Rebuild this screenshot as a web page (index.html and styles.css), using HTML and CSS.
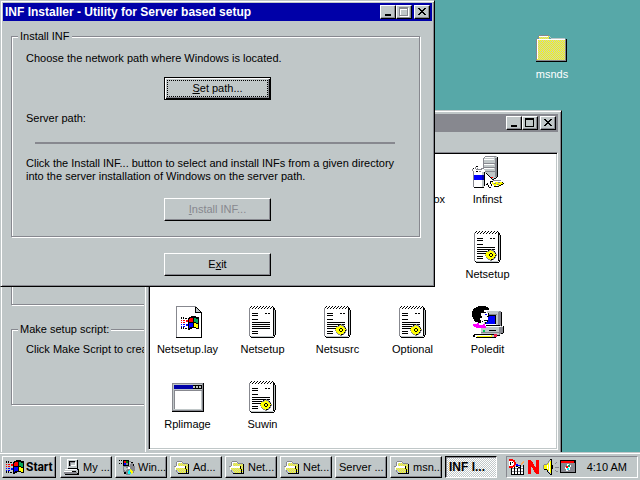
FILE: index.html
```html
<!DOCTYPE html>
<html lang="en">
<head>
<meta charset="utf-8">
<title>Desktop</title>
<link rel="stylesheet" href="styles.css">
</head>
<body>
<svg class="sprites" aria-hidden="true">
  <defs>
    <pattern id="dither" width="2" height="2" patternUnits="userSpaceOnUse">
      <rect width="2" height="2" fill="#ff0"/><path fill="#c0c7c8" d="M0 0h1v1H0zM1 1h1v1H1z"/>
    </pattern>
    <symbol id="note" viewBox="0 0 32 32">
      <path fill="#fff" d="M3 2h23v28H3z"/>
      <path fill="#87888f" d="M2 2h1v28H2zM3 30h1v1H3z"/>
      <path fill="#c0c7c8" d="M27 3h1v27h-1zM4 30h22v1H4z"/>
      <path d="M26 2h1v28h-1zM28 4h1v25h-1zM27 2h1v2h-1zM27 29h1v2h-1zM4 31h23v1H4zM3 30h1v1H3z"/>
      <path d="M4 0h1v1H4zM3 1h1v1H3zM5 2h1v1H5zM7 0h1v1H7zM6 1h1v1H6zM8 2h1v1H8zM10 0h1v1h-1zM9 1h1v1H9zM11 2h1v1h-1zM13 0h1v1h-1zM12 1h1v1h-1zM14 2h1v1h-1zM16 0h1v1h-1zM15 1h1v1h-1zM17 2h1v1h-1zM19 0h1v1h-1zM18 1h1v1h-1zM20 2h1v1h-1zM22 0h1v1h-1zM21 1h1v1h-1zM23 2h1v1h-1zM25 0h1v1h-1zM24 1h1v1h-1zM26 1h1v1h-1z"/>
      <path d="M5 7h6v1H5zM5 9h6v1H5zM5 13h6v1H5zM18 7h2v1h-2zM21 7h2v1h-2zM5 16h18v1H5zM5 18h18v1H5zM5 20h18v1H5zM5 22h18v1H5zM5 25h6v1H5zM5 27h6v1H5z"/>
    </symbol>
    <symbol id="gearnote" viewBox="0 0 32 32">
      <use href="#note" width="32" height="32"/>
      <path fill="#87888f" d="M18 18h2v1h2v1h1v1h1v2h1v2h-1v2h-1v1h-1v1h-2v1h-2v-1h-2v-1h-1v-1h-1v-2h-1v-2h1v-2h1v-1h1v-1h2z"/>
      <path d="M18 18h1v1h-1zM20 18h1v1h-1zM16 19h1v1h-1zM22 20h1v1h-1zM23 22h1v3h-1zM14 22h1v1h-1zM14 25h1v1h-1zM22 26h1v1h-1zM16 27h1v1h-1zM18 28h3v1h-3z"/>
      <path fill="#ff0" d="M17 20h1v-1h1v1h2v1h1v1h1v1h1v1h-1v2h-1v1h-1v1h-2v1h-1v-1h-2v-1h-1v-1h-1v-2h-1v-1h1v-2h2z"/>
      <path d="M18 22h2v1h1v2h-1v1h-2v-1h-1v-2h1z"/>
      <path fill="#ff0" d="M18 23h2v2h-2z"/>
    </symbol>
    <symbol id="flag" viewBox="0 0 18 16">
      <path d="M8 2h2V1h5v1h3v12h-3v-1h-4v1H9v1H7V3h1z"/>
      <path fill="#f00" d="M9 3h3v4H8V4h1z"/>
      <path fill="#00a857" d="M13 3h2v1h2v4h-2V7h-2z"/>
      <path fill="#00f" d="M8 8h4v4H9v1H8z"/>
      <path fill="#ff0" d="M13 8h2v1h2v4h-2v-1h-2z"/>
      <path d="M0 2h1v2H0zM2 2h1v2H2zM4 3h2v1H4zM0 12h1v2H0zM2 12h1v2H2zM4 13h2v1H4z"/>
      <path fill="#f00" d="M0 5h1v1H0zM2 5h2v1H2zM5 5h2v2H5zM0 7h1v1H0zM2 7h2v1H2z"/>
      <path fill="#00f" d="M0 9h1v1H0zM2 9h2v1H2zM5 9h2v2H5zM0 11h1v1H0zM2 11h2v1H2z"/>
    </symbol>
    <symbol id="layfile" viewBox="0 0 32 32">
      <path fill="#fff" d="M5 1h19l5 5v25H5z"/>
      <path fill="#87888f" d="M4 0h20v1H5v30H4z"/>
      <path fill="#c0c7c8" d="M24 2h1v1h1v1h1v1h1v1h-4z"/>
      <path d="M23 1h1v5h5v1h-6zM24 1h1v1h-1zM25 2h1v1h-1zM26 3h1v1h-1zM27 4h1v1h-1zM28 5h1v1h-1zM29 6h1v26H4v-1h25z"/>
      <use href="#flag" x="9" y="9" width="18" height="16"/>
    </symbol>
    <symbol id="appwin" viewBox="0 0 32 32">
      <path d="M0 2h32v29H0z"/><path fill="#87888f" d="M0 2h31v28H0z"/>
      <path fill="#c0c7c8" d="M1 3h29v26H1z"/><path fill="#0000a8" d="M2 4h19v4H2z"/>
      <path d="M21 4h9v4h-9z"/><path fill="#c0c7c8" d="M21 5h2v2h-2zM24 5h2v2h-2zM27 5h2v2h-2z"/>
      <path fill="#87888f" d="M2 9h28v1H3v18H2z"/><path fill="#fff" d="M3 10h26v18H3z"/>
    </symbol>
    <symbol id="tower" viewBox="0 0 32 32">
      <path fill="#c0c7c8" d="M11 2l2-2h12v22h-3l-2 2h-2l-4-6h-3z"/>
      <path fill="#87888f" d="M13 0h11v1H13zM12 1h1v1h-1zM11 2h1v14h-1zM23 2h2v19h-2zM12 7h11v1H12zM12 11h11v1H12zM12 15h11v1H12z"/>
      <path fill="#fff" d="M13 1h9v1h-9zM12 3h10v1H12zM12 8h10v1H12zM12 12h10v1H12z"/>
      <path d="M25 1h1v20h-1zM24 21h1v1h-1zM22 22h2v1h-2zM20 23h2v1h-2z"/>
      <path fill="#f00" d="M19 21h2v1h-2z"/>
      <path fill="#fff" d="M2 16h9v15H2zM1 13l3-3 2 3 5-2 2 4-2 2H2z"/>
      <path fill="#c0c7c8" d="M10 16h2v15h-2z"/>
      <path fill="#87888f" d="M1 15h1v16H1zM0 13h1v2H0zM3 11h1v2H3zM5 12h1v1h3v-1h3v1h-2v1H4v-1h1zM7 15h2v1H7z"/>
      <path d="M1 12h1v1H1zM4 10h2v1H4zM12 16h1v14h-1zM2 31h10v1H2zM4 15h2v1H4z"/>
      <path fill="#00f" d="M2 19h8v5H2z"/><path fill="#0000a8" d="M10 19h2v5h-2z"/>
      <path fill="#fff" d="M13 17h1v1h1v1h1v1h1v1h1v1h1v1h1v1h1v1h-4v2h1v2h1v2h-2v-2h-1v-2h-1v1h-1v1h-1z"/>
      <path d="M14 17h1v1h-1zM15 18h1v1h-1zM16 19h1v1h-1zM17 20h1v1h-1zM18 21h1v1h-1zM19 22h1v1h-1zM20 23h1v1h-1zM18 25h3v1h-3zM18 26h1v2h-1zM19 28h1v2h-1zM14 28h1v1h-1zM15 27h1v2h-1zM16 29h1v2h-1zM17 31h2v1h-2z"/>
      <path fill="#ff0" d="M20 26h10v1h1v1h-2v1h-2v1h-5v-1h-1z"/>
      <path fill="#87888f" d="M21 24h8v1h-8zM22 27h2v1h-2zM26 26h2v1h-2zM25 28h2v1h-2z"/>
      <path fill="#fff" d="M21 25h8v1h-8zM21 26h2v1h-2zM24 29h2v1h-2z"/>
      <path d="M30 26h1v1h-1zM31 27h1v1h-1zM29 28h2v1h-2zM27 29h2v1h-2zM22 30h5v1h-5z"/>
    </symbol>
    <symbol id="poledit" viewBox="0 0 32 32">
      <path fill="#c0c7c8" d="M15 5h13v14H12V9z"/><path fill="#fff" d="M16 4h11v1H16zM12 18h12v1H12z"/>
      <path fill="#87888f" d="M27 5h2v15h-3V7zM16 8h9v1h-9z"/><path d="M29 6h1v14h-1zM14 19h14v1H14z"/>
      <path d="M15 9h9v9H13z"/><path fill="#00f" d="M16 10h7v8h-9v-2h2z"/>
      <path fill="#c0c7c8" d="M8 21l3-1h19v6l-3 3H8z"/><path fill="#fff" d="M9 20h20v1H9zM8 21h1v7H8z"/>
      <path fill="#87888f" d="M27 21h4v6h-1v1h-2v1h-1zM9 26h18v1H9z"/><path d="M31 20h1v7h-1zM29 27h2v1h-2zM9 29h19v1H9zM17 24h7v1h-7z"/>
      <path fill="#00c957" d="M11 24h2v2h-2z"/>
      <path fill="#fff" d="M9 4h6v3h1v3h1v1h-1v3h-1v2h-3v3H7v-4z"/>
      <path d="M4 1h2V0h8v1h2v1h1v2h-5v3H9v3h1v2H8v2h1v3H6v-1H3v-1H2v-2H1v-2H0V5h1V3h1V2h2z"/>
      <path d="M12 6h2v1h-2zM16 7h1v2h-1zM15 10h2v1h-2zM12 14h3v1h-3zM10 15h1v1h-1z"/><path fill="#00f" d="M13 8h2v1h-2z"/>
      <path fill="#f0f" d="M1 18h4v-1h2v2h4v-1h2v2h1v2H4v-1H2v-1H1z"/>
      <path d="M1 29h1v-1h22v1h1v2h-1v1H4v-1H1z"/><path fill="#ff0" d="M5 29h15v2H5z"/><path fill="#fff" d="M5 29h14v1H5zM3 29h2v2H3z"/><path fill="#c0c7c8" d="M20 29h2v2h-2z"/><path fill="#f0204f" d="M22 28h3v3h-3z"/>
    </symbol>
    <symbol id="bigfolder" viewBox="0 0 32 28">
      <path fill="url(#dither)" d="M1 4h2V1h10v3h16v21H1z"/>
      <path fill="#87888f" d="M0 4h1v21H0zM1 3h1v1H1zM2 1h1v2H2zM3 0h10v1H3z"/><path fill="#fff" d="M3 1h9v1H3zM1 4h1v20H1zM13 4h16v1H13zM2 4h11v1H2z"/>
      <path fill="#c0c7c8" d="M13 1h1v1h-1zM14 2h1v1h-1zM15 3h14v1H15z"/>
      <path fill="#87888f" d="M29 4h1v22H0v-1h29z"/><path d="M30 4h1v22h-1zM0 26h31v1H0z"/>
    </symbol>
    <symbol id="folder" viewBox="0 0 16 16">
      <path fill="url(#dither)" d="M3 3h6l2 2h3v9H5L1 8h2z"/>
      <path fill="#87888f" d="M3 2h5v1H3zM2 3h1v4H2zM8 3h1v1H8zM9 4h5v1H9zM0 7h2v1H0zM1 9h1v2H1zM2 11h1v2H2zM3 13h1v1H3z"/>
      <path fill="#fff" d="M3 3h5v1H3zM3 4h1v3H3zM1 8h10v1H2v2H1zM2 7h9v1H2z"/>
      <path d="M14 5h1v10H4v-1h10zM11 7h1v3h-1zM12 10h1v4h-1z"/>
    </symbol>
    <symbol id="computer" viewBox="0 0 16 16">
      <path d="M4 1h10v9H4z"/><path fill="#c0c7c8" d="M3 0h10v9H3z"/><path fill="#fff" d="M3 0h10v1H4v8H3z"/>
      <path d="M5 2h6v1H6v4H5z"/><path fill="#87888f" d="M6 3h5v1H7v3H6z"/><path fill="#fff" d="M7 6h4V3h1v4H7z"/>
      <path d="M1 10h14v5H1z"/><path fill="#c0c7c8" d="M1 10h12v1h1v3H1z"/>
      <path fill="#fff" d="M1 10h12v1H1zM0 12h12v1H0z"/><path fill="#87888f" d="M0 13h13v2H0z"/><path d="M8 12h4v1H8zM1 15h14v1H1z"/>
    </symbol>
    <symbol id="disc" viewBox="0 0 16 16">
      <path fill="#87888f" d="M7 2h5v1h2v2h1v2h1v5h-1v2h-2v1h-2v1H7v-1H5v-2H4V5h1V3h2z"/>
      <path fill="#c0c7c8" d="M10 3h3l-3 5zM5 8l4 1-3 4z"/><path fill="#0ff" d="M10 10l2 5H9z"/><path fill="#ff0" d="M11 10l3 3-2 2z"/><path fill="#fff" d="M9 8h2v2H9z"/>
      <path d="M0 1h1v1H0zM2 1h1v1H2zM0 4h1v1H0zM2 4h1v1H2zM4 1h5v1H4zM4 2h1v5H4zM9 1h1v6H9zM5 6h4v1H5zM12 3h2v1h-2zM14 5h1v2h-1zM5 13h2v2H5z"/>
      <path fill="#f00" d="M5 2h2v2H5z"/><path fill="#008000" d="M7 2h2v2H7z"/><path fill="#00f" d="M5 4h2v2H5z"/>
    </symbol>
  </defs>
</svg>

<main class="desktop">
  <a class="item shortcut" href="#"><svg class="shortcut-icon"><use href="#bigfolder"/></svg><span>msnds</span></a>

  <section class="window script-window">
    <fieldset class="group previous-group"></fieldset>
    <fieldset class="group script-group">
      <legend>Make setup script:</legend>
      <p>Click Make Script to crea</p>
    </fieldset>
  </section>

  <section class="window explorer">
    <header class="titlebar inactive">
      <div class="controls">
        <button class="control" aria-label="Minimize"><svg viewBox="0 0 12 10"><path d="M3 7h6v2H3z"/></svg></button>
        <button class="control" aria-label="Maximize"><svg viewBox="0 0 12 10"><path fill-rule="evenodd" d="M1 0h9v9H1zM2 2h7v6H2z"/></svg></button>
        <button class="control close" aria-label="Close"><svg viewBox="0 0 12 10"><path d="M2 1h2v1h1v1h2V2h1V1h2v1H9v1H8v1H7v1h1v1h1v1h1v1H8V7H7V6H5v1H4v1H2V7h1V6h1V5h1V4H4V3H3V2H2z"/></svg></button>
      </div>
    </header>
    <div class="menubar"></div>
    <div class="files">
      <a class="item partial" href="#"><span>ox</span></a>
      <a class="item infinst" href="#"><svg><use href="#tower"/></svg><span>Infinst</span></a>
      <a class="item last" href="#"><svg><use href="#gearnote"/></svg><span>Netsetup</span></a>
      <a class="item" href="#"><svg><use href="#layfile"/></svg><span>Netsetup.lay</span></a>
      <a class="item" href="#"><svg><use href="#note"/></svg><span>Netsetup</span></a>
      <a class="item" href="#"><svg><use href="#gearnote"/></svg><span>Netsusrc</span></a>
      <a class="item" href="#"><svg><use href="#gearnote"/></svg><span>Optional</span></a>
      <a class="item" href="#"><svg><use href="#poledit"/></svg><span>Poledit</span></a>
      <a class="item" href="#"><svg><use href="#appwin"/></svg><span>Rplimage</span></a>
      <a class="item" href="#"><svg><use href="#gearnote"/></svg><span>Suwin</span></a>
    </div>
  </section>

  <section class="window installer">
    <header class="titlebar">
      <h1>INF Installer - Utility for Server based setup</h1>
      <div class="controls">
        <button class="control" aria-label="Minimize"><svg viewBox="0 0 12 10"><path d="M3 7h6v2H3z"/></svg></button>
        <button class="control" aria-label="Maximize" disabled><svg viewBox="0 0 12 10"><path fill="#fff" fill-rule="evenodd" d="M2 1h9v9H2zM3 3h7v6H3z"/><path fill="#87888f" fill-rule="evenodd" d="M1 0h9v9H1zM2 2h7v6H2z"/></svg></button>
        <button class="control close" aria-label="Close"><svg viewBox="0 0 12 10"><path d="M2 1h2v1h1v1h2V2h1V1h2v1H9v1H8v1H7v1h1v1h1v1h1v1H8V7H7V6H5v1H4v1H2V7h1V6h1V5h1V4H4V3H3V2H2z"/></svg></button>
      </div>
    </header>
    <fieldset class="group install-group">
      <legend>Install INF</legend>
      <p>Choose the network path where Windows is located.</p>
      <button class="push default"><span><u>S</u>et path...</span></button>
      <p>Server path:</p>
      <hr>
      <p>Click the Install INF... button to select and install INFs from a given directory<br>into the server installation of Windows on the server path.</p>
      <button class="push" disabled><span><u>I</u>nstall INF...</span></button>
    </fieldset>
    <button class="push exit"><span>E<u>x</u>it</span></button>
  </section>
</main>

<footer class="taskbar">
  <button class="task start"><svg class="start-flag"><use href="#flag"/></svg><span>Start</span></button>
  <nav class="tasks">
    <button class="task"><svg><use href="#computer"/></svg><span>My ...</span></button>
    <button class="task"><svg><use href="#disc"/></svg><span>Win...</span></button>
    <button class="task"><svg><use href="#folder"/></svg><span>Ad...</span></button>
    <button class="task"><svg><use href="#folder"/></svg><span>Net...</span></button>
    <button class="task"><svg><use href="#folder"/></svg><span>Net...</span></button>
    <button class="task"><span>Server ...</span></button>
    <button class="task"><svg><use href="#folder"/></svg><span>msn...</span></button>
    <button class="task active"><span>INF I...</span></button>
  </nav>
  <div class="tray">
    <svg viewBox="0 0 16 16"><path fill="#fff" d="M2 8h12v7H2z"/><path fill="#87888f" d="M2 9h12v1H2zM2 12h12v1H2z"/><path d="M2 8h1v7H2zM5 8h1v7H5zM8 9h1v6H8zM11 8h1v7h-1zM14 6h1v9h-1zM2 15h13v1H2zM7 7h2v1H7zM9 8h2v1H9zM11 6h1v2h-1zM12 5h1v1h-1zM13 3h1v2h-1z"/><path fill="#ffa857" d="M12 4l2-2h1v1l-3 4z"/><path fill="#00f" d="M7 5h2v1h2v1H7z"/><path fill="#f00" d="M0 0h4v1h2v2h1v3H6v2H4v1H0V7h4V6h1V3H4V2H0z"/><path fill="#fff" d="M0 2h4v1h1v3H4v1H0z"/><path d="M1 3h1v3H1zM3 3h1v1H3z"/></svg>
    <svg viewBox="0 0 16 16"><path fill="#f00" d="M2 1h3l5 8V1h3v14h-3L5 7v8H2z"/></svg>
    <svg viewBox="0 0 16 16"><path fill="#ff0" d="M1 6h3l4-5v14l-4-5H1z"/><path fill="#fff" d="M4 6h1v4H4zM6 3h1v10H6z"/><path fill="#87888f" d="M0 6h1v4H0zM1 5h3v1H1zM4 4h1v1H4zM5 2h1v2H5zM6 1h1v1H6z"/><path d="M7 0h2v16H7v-1h1V1H7zM1 10h3v1H1zM4 11h1v2H4zM5 13h1v1H5zM6 14h1v1H6zM9 6h1v4H9z"/><path fill="#87888f" d="M12 4h1v1h-1zM13 3h1v1h-1zM12 8h4v1h-4zM12 11h1v1h-1zM13 12h2v1h-2z"/></svg>
    <svg viewBox="0 0 16 16"><path d="M0 1h16v13H0z"/><path fill="#87888f" d="M1 4h14v9H1z"/><path fill="#f00" d="M1 2h13v2H1z"/><path fill="#fff" d="M7 5h2v1h2v2h-1v3H8v1H6v-2H5V8h2z"/><path fill="#f00" d="M6 7h2v2H6z"/><path fill="#00a857" d="M8 6h2v2H8z"/><path fill="#0ff" d="M7 9h2v2H7z"/></svg>
    <time>4:10 AM</time>
  </div>
</footer>
</body>
</html>
```
FILE: styles.css
```css
:root {
  --face: #c0c7c8;
  --shade: #87888f;
  --teal: #57a8a8;
  --navy: #0000a8;
}

* { box-sizing: border-box; }

body {
  margin: 0;
  min-height: 100vh;
  display: flex;
  flex-direction: column;
  overflow: hidden;
  background: var(--teal);
  color: #000;
  font: 11px/13px "Liberation Sans", Arial, sans-serif;
}

svg { display: block; flex: none; shape-rendering: crispEdges; }
.sprites { position: absolute; width: 0; height: 0; }
h1, p, hr, fieldset, legend { margin: 0; padding: 0; }
button { font: inherit; color: inherit; margin: 0; padding: 0; }
a { color: inherit; text-decoration: none; }

.desktop { flex: 1; position: relative; overflow: hidden; }

/* Windows */
.window {
  position: absolute;
  background: var(--face);
  border: 1px solid;
  border-color: var(--face) #000 #000 var(--face);
  box-shadow: inset 1px 1px #fff, inset -1px -1px var(--shade);
}
.installer { left: 0; top: 0; width: 435px; padding: 2px 2px 10px; }
.explorer { left: 144px; top: 110px; width: 418px; padding: 3px; }
.script-window { left: 0; top: 240px; width: 240px; padding: 2px 2px 60px; }

.titlebar {
  display: flex;
  align-items: center;
  height: 18px;
  padding: 0 2px;
  background: var(--navy);
  color: #fff;
}
.titlebar.inactive { background: var(--shade); }
.titlebar h1 { font-size: 12px; line-height: 13px; white-space: nowrap; }
.controls { display: flex; margin-left: auto; }
.control {
  width: 16px;
  height: 14px;
  padding: 1px;
  background: var(--face);
  border: 1px solid;
  border-color: #fff #000 #000 #fff;
  box-shadow: inset -1px -1px var(--shade);
}
.control svg { width: 12px; height: 10px; }
.control.close { margin-left: 2px; }

/* Group boxes */
.group {
  min-width: 0;
  margin: 9px 12px 0 8px;
  padding: 9px 10px 15px 14px;
  border: 1px solid var(--shade);
  box-shadow: 1px 1px #fff, inset 1px 1px #fff;
}
.group legend { margin-left: -8px; padding: 0 2px; background: var(--face); }
.group p { white-space: nowrap; }
.install-group .push { margin: 12px auto; }
.install-group hr { height: 2px; margin: 17px 14px 13px 9px; border: 0; background: var(--shade); }
.install-group .push:last-child { margin: 15px auto 0; }
.previous-group { height: 53px; }
.script-group { margin-top: 18px; padding-top: 7px; padding-bottom: 48px; }

/* Buttons */
.push {
  display: block;
  width: 107px;
  height: 23px;
  background: var(--face);
  border: 1px solid;
  border-color: #fff #000 #000 #fff;
  box-shadow: inset -1px -1px var(--shade);
}
.push.default {
  padding: 2px;
  border-color: #000;
  box-shadow: inset 1px 1px #fff, inset -1px -1px #000, inset -2px -2px var(--shade);
}
.push.default span { display: block; padding: 1px; border: 1px dotted #000; }
.push:disabled { color: var(--shade); }
.push.exit { margin: 16px auto 0; }

/* Icons with captions */
.item {
  display: flex;
  flex-direction: column;
  align-items: center;
  gap: 5px;
  height: 75px;
  white-space: nowrap;
}
.item svg { width: 32px; height: 32px; }
.shortcut { position: absolute; left: 514px; top: 35px; width: 76px; color: #fff; }
.shortcut .shortcut-icon { height: 28px; }
.menubar { height: 20px; }
.files {
  display: grid;
  grid-template-columns: repeat(5, 75px);
  align-content: start;
  height: 298px;
  padding: 3px 1px 1px;
  background: #fff;
  border: 1px solid;
  border-color: var(--shade) #fff #fff var(--shade);
  box-shadow: inset 1px 1px #000, inset -1px -1px var(--face);
}
.partial { grid-column: 4; padding: 37px 5px 0 0; align-items: flex-end; }
.infinst, .last { grid-column: 5; }

/* Taskbar */
.taskbar {
  display: flex;
  align-items: center;
  height: 28px;
  padding: 2px 2px 0;
  background: var(--face);
  box-shadow: inset 0 1px var(--face), inset 0 2px #fff;
}
.tasks { display: flex; gap: 3px; margin-left: 4px; }
.task {
  display: flex;
  align-items: center;
  gap: 3px;
  width: 52px;
  height: 22px;
  padding: 0 3px;
  overflow: hidden;
  white-space: nowrap;
  background: var(--face);
  border: 1px solid;
  border-color: #fff #000 #000 #fff;
  box-shadow: inset -1px -1px var(--shade);
}
.task svg { width: 16px; height: 16px; }
.task.start { width: 54px; gap: 2px; font: bold 12px/13px Roboto, "Liberation Sans", sans-serif; }
.task .start-flag { width: 18px; }
.task.active {
  font-weight: bold;
  font-size: 12px;
  border-color: #000 #fff #fff #000;
  box-shadow: inset 1px 1px var(--shade);
  background: repeating-conic-gradient(#fff 0 25%, var(--face) 0 50%) 0 0 / 2px 2px;
}
.tray {
  display: flex;
  align-items: center;
  gap: 1px;
  width: 132px;
  height: 22px;
  margin-left: auto;
  padding: 0 10px 0 2px;
  border: 1px solid;
  border-color: var(--shade) #fff #fff var(--shade);
}
.tray svg { width: 16px; height: 16px; }
.tray time { margin-left: auto; white-space: nowrap; }
```
